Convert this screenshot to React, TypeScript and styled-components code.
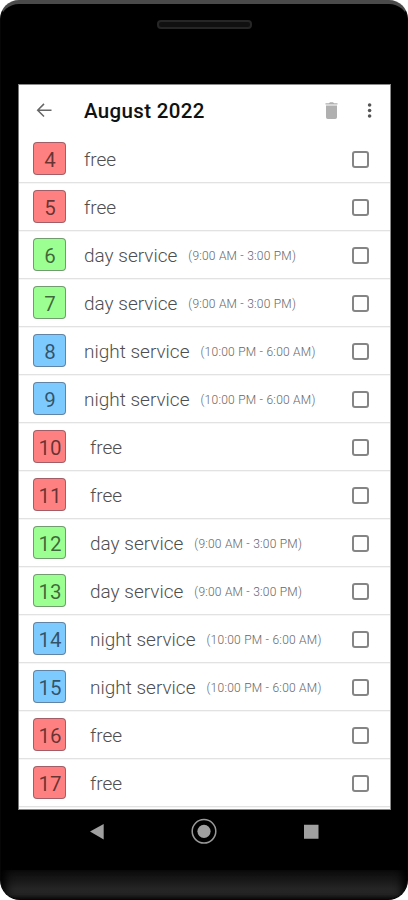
import React from "react";
import styled, { createGlobalStyle } from "styled-components";

const GlobalStyle = createGlobalStyle`
  * { box-sizing: border-box; }
  body { margin: 0; background: #fff; font-family: Roboto, "Liberation Sans", sans-serif; }
`;

const Phone = styled.main`
  width: 408px;
  height: 900px;
  display: flex;
  flex-direction: column;
  background: #000;
  border: 1px solid #060606;
  border-top: 4px solid #4a4a4a;
  border-radius: 19px 19px 20px 20px;
  overflow: hidden;
`;

const TopBezel = styled.div`
  height: 80px;
  flex: none;
  display: flex;
  justify-content: center;
  padding-top: 16px;
`;

const Speaker = styled.div`
  width: 95px;
  height: 9px;
  border: 2px solid #262626;
  border-radius: 4px;
  background: #101010;
`;

const Screen = styled.section`
  height: 726px;
  flex: none;
  margin: 0 16px 0 17px;
  background: #fff;
  border: 1px solid #8a8a8a;
  border-left-color: #777;
  display: flex;
  flex-direction: column;
  overflow: hidden;
`;

const Header = styled.header`
  height: 50px;
  flex: none;
  display: flex;
  align-items: center;
  padding: 1px 13px 0 14px;
`;

const Title = styled.h1`
  flex: 1;
  margin: 0 0 0 29px;
  font-size: 20.5px;
  line-height: 28px;
  font-weight: 500;
  letter-spacing: 0.35px;
  color: #111;
  white-space: nowrap;
`;

const Icon = styled.svg`
  display: block;
  flex: none;
`;

const List = styled.ul`
  list-style: none;
  margin: 0;
  padding: 0;
`;

const Row = styled.li`
  height: 48px;
  display: flex;
  align-items: center;
  padding: 0 21px 0 14px;
  border-bottom: 1px solid #e2e2e2;
  box-shadow: 0 1px 0 #f6f6f6;
`;

const tones = { free: "#ff8080", day: "#9cff91", night: "#7dcaff" };
type Kind = keyof typeof tones;

const Badge = styled.span<{ $kind: Kind }>`
  width: 33px;
  height: 33px;
  flex: none;
  display: flex;
  align-items: center;
  justify-content: center;
  padding: 3px 0 0 1px;
  border: 1px solid rgba(70, 60, 75, 0.5);
  border-radius: 4px;
  background: ${(p) => tones[p.$kind]};
  color: rgba(0, 0, 0, 0.6);
  font-size: 20.5px;
  line-height: 24px;
`;

const Entry = styled.div<{ $wide: boolean }>`
  flex: 1;
  display: flex;
  align-items: center;
  margin: 2px 0 0 ${(p) => (p.$wide ? 24 : 18)}px;
  white-space: nowrap;
`;

const Label = styled.span`
  font-size: 19px;
  line-height: 24px;
  font-weight: 300;
  color: #4f4f4f;
`;

const Hours = styled.span<{ $kind: Kind }>`
  margin-left: 11px;
  font-size: 12px;
  line-height: 16px;
  font-weight: 300;
  letter-spacing: ${(p) => (p.$kind === "night" ? 0.25 : 0.22)}px;
  color: #666;
`;

const Checkbox = styled.button`
  width: 17px;
  height: 17px;
  flex: none;
  margin-top: 2px;
  padding: 0;
  border: 2px solid #858585;
  border-radius: 3px;
  background: #fff;
`;

const NavBar = styled.nav`
  height: 60px;
  flex: none;
  display: flex;
  justify-content: space-between;
  padding: 8px 88px 0 88px;
`;

const Chin = styled.div`
  flex: 1;
  background: linear-gradient(#0d0d0d, #161616 30%, #252525 65%, #242424 85%, #111);
  box-shadow: inset 9px 0 8px -4px #000, inset -9px 0 8px -4px #000;
`;

const names: Record<Kind, string> = { free: "free", day: "day service", night: "night service" };
const hours: Record<Kind, string> = {
  free: "",
  day: "(9:00 AM - 3:00 PM)",
  night: "(10:00 PM - 6:00 AM)",
};
const kinds: Kind[] = ["free", "free", "day", "day", "night", "night"];
const days = Array.from({ length: 14 }, (_, i) => ({ date: i + 4, kind: kinds[i % 6] }));

export default function App() {
  return (
    <>
      <GlobalStyle />
      <Phone>
        <TopBezel>
          <Speaker />
        </TopBezel>
        <Screen>
          <Header>
            <Icon width="22" height="22" viewBox="0 0 22 22" fill="none" stroke="#666" strokeWidth="1.5">
              <path d="M18.5 10.2H5M11 3.9L4.7 10.2L11 16.5" />
            </Icon>
            <Title>August 2022</Title>
            <Icon width="14" height="18" viewBox="0 0 14 18" fill="#b0b0b0">
              <path d="M0.5 1.2h3.5l1-1h3l1 1H12.5V2.6H0.5zM1 3.5h11v11.7a1.8 1.8 0 0 1-1.8 1.8H2.8a1.8 1.8 0 0 1-1.8-1.8z" />
            </Icon>
            <Icon width="38" height="18" viewBox="0 0 38 18" fill="#555">
              <circle cx="30.6" cy="3" r="1.8" />
              <circle cx="30.6" cy="8.5" r="1.8" />
              <circle cx="30.6" cy="14" r="1.8" />
            </Icon>
          </Header>
          <List>
            {days.map((d) => (
              <Row key={d.date}>
                <Badge $kind={d.kind}>{d.date}</Badge>
                <Entry $wide={d.date > 9}>
                  <Label>{names[d.kind]}</Label>
                  {hours[d.kind] && <Hours $kind={d.kind}>{hours[d.kind]}</Hours>}
                </Entry>
                <Checkbox aria-label={`Select ${d.date}`} />
              </Row>
            ))}
          </List>
        </Screen>
        <NavBar>
          <Icon width="15" height="28" viewBox="0 0 15 28" fill="#a0a0a0">
            <path d="M1 13.6L14.7 6v15.4z" />
          </Icon>
          <Icon width="28" height="28" viewBox="0 0 28 28">
            <circle cx="14" cy="13.3" r="11.8" fill="none" stroke="#999" strokeWidth="1.5" />
            <circle cx="14" cy="13.3" r="6.6" fill="#a0a0a0" />
          </Icon>
          <Icon width="15" height="28" viewBox="0 0 15 28" fill="#a0a0a0">
            <path d="M0 6.7h14.5v14H0z" />
          </Icon>
        </NavBar>
        <Chin />
      </Phone>
    </>
  );
}
